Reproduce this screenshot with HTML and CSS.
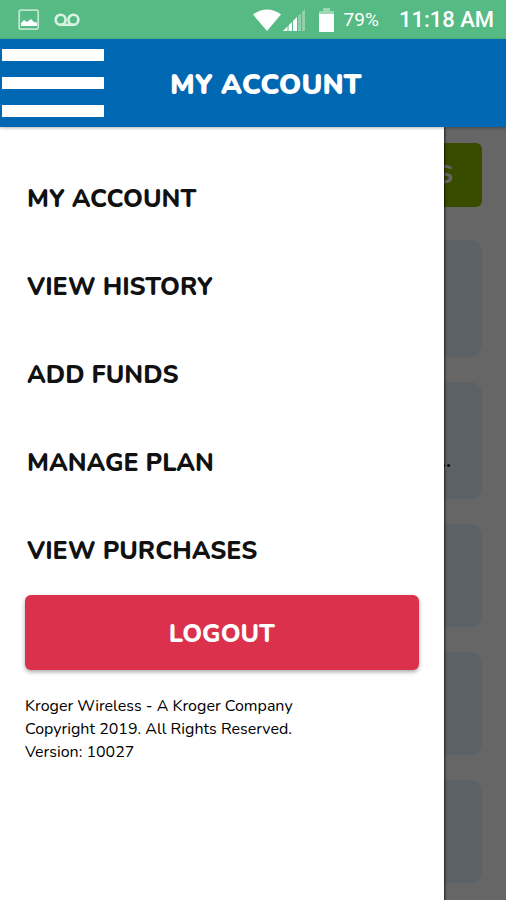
FILE: index.html
```html
<!DOCTYPE html>
<html lang="en">
<head>
<meta charset="utf-8">
<meta name="viewport" content="width=device-width, initial-scale=1">
<title>My Account</title>
<link rel="stylesheet" href="styles.css">
</head>
<body>
<div class="status">
  <svg class="picture" width="22" height="22" viewBox="0 0 22 22" aria-hidden="true">
    <rect x="1.2" y="1.2" width="19" height="19" rx="1.5" fill="none" stroke="#bfe6cf" stroke-width="1.8"/>
    <path d="M3 17v-3l3-3 3 2 4-3 3 3 3 .5V17z" fill="#fff"/>
  </svg>
  <svg class="voicemail" width="26" height="14" viewBox="0 0 26 14" aria-hidden="true">
    <g fill="none" stroke="#d9f3e3" stroke-width="2.6">
      <circle cx="6.600" cy="6.800" r="5"/><circle cx="19.400" cy="6.800" r="5"/><path d="M6.600 11.800h12.800"/>
    </g>
  </svg>
  <div class="status-right">
    <svg width="28" height="22" viewBox="0 0 28 22" aria-hidden="true"><path d="M0 5.500Q14-4.500 28 5.500L14 22z" fill="#fff"/></svg>
    <svg width="22" height="22" viewBox="0 0 22 22" aria-hidden="true">
      <path d="M0 22L22 0v22z" fill="#8ed1ab"/>
      <path d="M0 22L14 8v14z" fill="#fff"/>
      <path d="M5 16v6M9.500 12v10M14.500 7v15M18.500 3v19" stroke="#55ba83" stroke-width="1"/>
    </svg>
    <svg class="battery" width="15" height="24" viewBox="0 0 15 24" aria-hidden="true">
      <path d="M4 0h7v3h4v4H0V3h4z" fill="#9bd7b4"/><path d="M0 6h15v18H0z" fill="#fff"/>
    </svg>
    <span class="percent">79%</span>
    <span class="clock">11:18 AM</span>
  </div>
</div>
<header class="bar">
  <button class="burger" type="button" aria-label="Menu"><span></span><span></span><span></span></button>
  <h1>MY ACCOUNT</h1>
</header>
<div class="stage">
  <main class="page">
    <button class="action" type="button">S</button>
    <section class="card"></section>
    <section class="card">..</section>
    <section class="card short"></section>
    <section class="card short"></section>
    <section class="card short"></section>
  </main>
  <div class="scrim"></div>
  <aside class="drawer">
    <nav>
      <a href="#account">MY ACCOUNT</a>
      <a href="#history">VIEW HISTORY</a>
      <a href="#funds">ADD FUNDS</a>
      <a href="#plan">MANAGE PLAN</a>
      <a href="#purchases">VIEW PURCHASES</a>
    </nav>
    <button class="logout" type="button">LOGOUT</button>
    <p>Kroger Wireless - A Kroger Company<br>Copyright 2019. All Rights Reserved.<br>Version: 10027</p>
  </aside>
</div>
</body>
</html>
```
FILE: styles.css
```css
* { box-sizing: border-box; }

body {
  margin: 0;
  min-height: 100vh;
  display: flex;
  flex-direction: column;
  font-family: Nunito, Lato, sans-serif;
  color: #111;
  background: #fff;
}

button { border: 0; font-family: inherit; }

.status {
  display: flex;
  align-items: center;
  height: 39px;
  padding: 0 12px 0 18px;
  background: #55ba83;
  color: #fff;
  font-family: Roboto, sans-serif;
}
.voicemail { margin-left: 14px; }
.status-right { display: flex; align-items: center; margin-left: auto; gap: 2px; }
.battery { margin: 0 8px 0 12px; }
.percent { font-size: 19px; }
.clock { margin-left: 18px; font-size: 22px; font-weight: 500; }

.bar {
  position: relative;
  z-index: 2;
  display: flex;
  align-items: center;
  height: 88px;
  padding-left: 2px;
  background: #0067b3;
  color: #fff;
  box-shadow: 0 1px 3px rgba(0, 0, 0, .3);
}
.burger {
  display: flex;
  flex-direction: column;
  gap: 16px;
  width: 102px;
  padding: 0;
  background: none;
}
.burger span { height: 12px; background: #fff; }
h1 { margin: 0; padding: 3px 0 0 66px; font-size: 28px; font-weight: 900; line-height: 36px; }

.stage { position: relative; flex: 1; display: flex; overflow: hidden; }
.page {
  flex: 1;
  display: flex;
  flex-direction: column;
  gap: 25px;
  padding: 16px 24px;
}
.action {
  height: 64px;
  margin-bottom: 8px;
  padding: 0 29px;
  border-radius: 6px;
  background: #8cbe00;
  color: #fff;
  font-size: 25px;
  font-weight: 700;
  text-align: right;
}
.card {
  display: flex;
  align-items: center;
  justify-content: flex-end;
  height: 117px;
  padding: 40px 31px 0;
  border-radius: 12px;
  background: #e6f2fc;
  color: #000;
  font-size: 20px;
  font-weight: 700;
}
.card.short { height: 103px; }
.scrim { position: absolute; inset: 0; background: rgba(0, 0, 0, .6); }

.drawer {
  position: absolute;
  inset: 0 auto 0 0;
  width: 87.7%;
  padding: 28px 25px;
  background: #fff;
  box-shadow: 1px 0 2px rgba(0, 0, 0, .7);
}
nav { display: flex; flex-direction: column; }
nav a {
  padding: 0 2px;
  color: #111;
  font-size: 25px;
  font-weight: 800;
  line-height: 88px;
  text-decoration: none;
}
.logout {
  display: block;
  width: 100%;
  height: 75px;
  padding: 2px 0 0;
  border-radius: 6px;
  background: #dc314c;
  color: #fff;
  font-size: 25px;
  font-weight: 800;
  box-shadow: 0 2px 4px rgba(0, 0, 0, .35);
}
p { margin: 25px 0 0; color: #000; font-size: 16px; line-height: 23px; }
```
